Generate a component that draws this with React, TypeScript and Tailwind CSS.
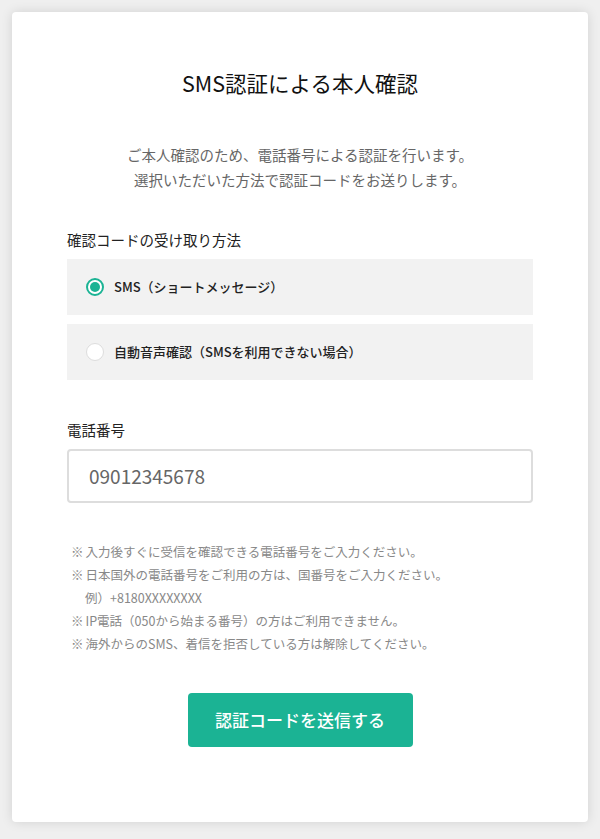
const notes = [
  "入力後すぐに受信を確認できる電話番号をご入力ください。",
  "日本国外の電話番号をご利用の方は、国番号をご入力ください。",
  "IP電話（050から始まる番号）の方はご利用できません。",
  "海外からのSMS、着信を拒否している方は解除してください。",
]

const App = () => {
  return (
    <section
      className="min-h-[839px] bg-[#efefef] p-3"
      style={{ fontFamily: '"Noto Sans CJK JP", "Noto Sans", sans-serif' }}
    >
      <div className="h-[810px] rounded bg-white px-[55px] pt-[56px] shadow-[0_0_12px_rgba(0,0,0,0.12)]">
        <h1 className="text-center text-[21.5px] leading-[30px] font-normal text-[#111]">SMS認証による本人確認</h1>

        <p className="mt-[44px] text-center text-[14.5px] leading-[25px] text-[#666]">
          ご本人確認のため、電話番号による認証を行います。
          <br />
          選択いただいた方法で認証コードをお送りします。
        </p>

        <div className="mt-[38px] text-[14.5px] leading-[20px] text-[#222]">確認コードの受け取り方法</div>

        <div className="mt-[9px] flex flex-col gap-[9px]">
          <label className="flex h-[56px] items-center bg-[#f2f2f2] px-[19px]">
            <span className="flex h-[18px] w-[18px] items-center justify-center rounded-full border-2 border-[#1bb394] bg-white">
              <span className="h-[10px] w-[10px] rounded-full bg-[#1bb394]" />
            </span>
            <span className="ml-[10px] text-[13px] font-medium text-[#222]">SMS（ショートメッセージ）</span>
          </label>
          <label className="flex h-[56px] items-center bg-[#f2f2f2] px-[19px]">
            <span className="h-[18px] w-[18px] rounded-full border border-[#ddd] bg-white" />
            <span className="ml-[10px] text-[13px] font-medium text-[#222]">自動音声確認（SMSを利用できない場合）</span>
          </label>
        </div>

        <div className="mt-[40px] text-[14.5px] leading-[20px] text-[#222]">電話番号</div>
        <div className="mt-[9px] flex h-[54px] items-center rounded border-2 border-[#ddd] px-5">
          <span className="text-[19px] text-[#666]">09012345678</span>
        </div>

        <ul className="mt-[37px] pl-[4px] text-[12.5px] leading-[23px] text-[#888]">
          {notes.map((n, i) => (
            <li key={i}>
              <span className="mr-[2px]">※</span>
              {n}
              {i === 1 && <div className="pl-[14px]">例）+8180XXXXXXXX</div>}
            </li>
          ))}
        </ul>

        <div className="mt-[38px] flex justify-center">
          <button className="h-[54px] w-[225px] rounded bg-[#1bb394] text-[17px] font-medium text-white">
            認証コードを送信する
          </button>
        </div>
      </div>
    </section>
  )
}

export default App
